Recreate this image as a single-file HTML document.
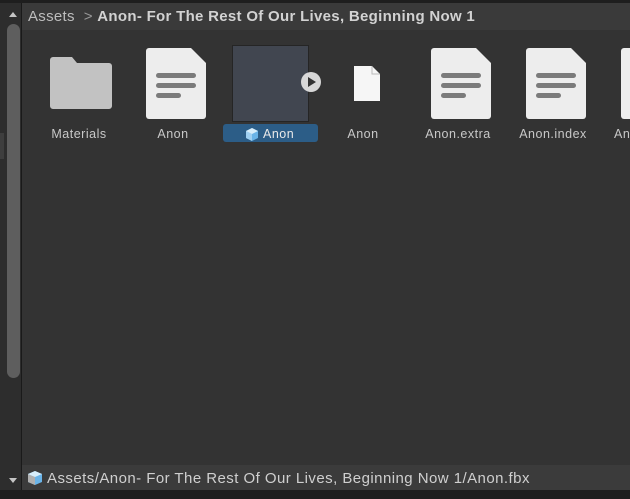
<!DOCTYPE html>
<html><head><style>
*{margin:0;padding:0;box-sizing:border-box}
body{width:630px;height:499px;background:#282828;position:relative;overflow:hidden;font-family:"Liberation Sans",sans-serif;color:#c4c4c4}
.abs{position:absolute}
.lbl{position:absolute;font-size:12.5px;color:#c8c8c8;text-align:center;width:90px;top:127px;letter-spacing:0.5px}
</style></head><body>
<div class="abs" style="left:0;top:0;width:630px;height:3px;background:#1e1e1e"></div>
<div class="abs" style="left:0;top:3px;width:21px;height:487px;background:#2d2d2d"></div>
<div class="abs" style="left:0;top:133px;width:4px;height:26px;background:#3e3e3e"></div>
<div class="abs" style="left:7px;top:24px;width:13px;height:354px;background:#5e5e5e;border-radius:7px"></div>
<div class="abs" style="left:9px;top:12px;width:0;height:0;border-left:4px solid transparent;border-right:4px solid transparent;border-bottom:5px solid #c4c4c4"></div>
<div class="abs" style="left:9px;top:478px;width:0;height:0;border-left:4px solid transparent;border-right:4px solid transparent;border-top:5px solid #c4c4c4"></div>
<div class="abs" style="left:21px;top:3px;width:1px;height:487px;background:#1a1a1a"></div>
<div class="abs" style="left:22px;top:3px;width:608px;height:27px;background:#3a3a3a"></div>
<div class="abs" style="left:22px;top:30px;width:608px;height:435px;background:#333333"></div>
<div class="abs" style="left:28px;top:8px;font-size:15px;color:#bdbdbd;white-space:nowrap;letter-spacing:0.3px">Assets <span style="color:#999">&nbsp;&gt;&nbsp;</span><b style="color:#d2d2d2">Anon- For The Rest Of Our Lives, Beginning Now 1</b></div>
<svg class="abs" style="left:50px;top:57px" width="62" height="52"><path d="M3 0h19l5 6h32a3 3 0 0 1 3 3v40a3 3 0 0 1-3 3H3a3 3 0 0 1-3-3V3a3 3 0 0 1 3-3z" fill="#c2c2c2"/></svg>
<div class="lbl" style="left:34px">Materials</div>
<svg class="abs" style="left:146px;top:48px" width="60" height="71"><path d="M3 0h42l15 15v53a3 3 0 0 1-3 3H3a3 3 0 0 1-3-3V3a3 3 0 0 1 3-3z" fill="#ededed"/><rect x="10" y="25" width="40" height="5" rx="2.5" fill="#7b7b7b"/><rect x="10" y="35" width="40" height="5" rx="2.5" fill="#7b7b7b"/><rect x="10" y="45" width="25" height="5" rx="2.5" fill="#7b7b7b"/></svg>
<div class="lbl" style="left:128px">Anon</div>
<div class="abs" style="left:232px;top:45px;width:77px;height:77px;background:#414650;border:1px solid #252525"></div>
<svg class="abs" style="left:300px;top:71px" width="22" height="22"><circle cx="11" cy="11" r="10" fill="#d8d8d8"/><path d="M8 6l8 5-8 5z" fill="#333"/></svg>
<div class="abs" style="left:223px;top:124px;width:95px;height:18px;background:#2c5d87;border-radius:3px"></div>
<svg class="abs" style="left:245px;top:127px" width="14" height="14"><path d="M7 1l6 3v7l-6 3-6-3V4z" fill="#6ab4e8"/><path d="M1 4l6 3v7l-6-3z" fill="#9fd0f2"/><path d="M7 1l6 3-6 3-6-3z" fill="#d8eefb"/></svg>
<div class="abs" style="left:263px;top:127px;font-size:12.5px;color:#e8e8e8;letter-spacing:0.5px">Anon</div>
<svg class="abs" style="left:353px;top:65px" width="28" height="37"><path d="M1 1h18l8 8v27H1z" fill="#f6f6f6"/><path d="M19 1v8h8" fill="none" stroke="#bbb" stroke-width="1"/></svg>
<div class="lbl" style="left:318px">Anon</div>
<svg class="abs" style="left:431px;top:48px" width="60" height="71"><path d="M3 0h42l15 15v53a3 3 0 0 1-3 3H3a3 3 0 0 1-3-3V3a3 3 0 0 1 3-3z" fill="#ededed"/><rect x="10" y="25" width="40" height="5" rx="2.5" fill="#7b7b7b"/><rect x="10" y="35" width="40" height="5" rx="2.5" fill="#7b7b7b"/><rect x="10" y="45" width="25" height="5" rx="2.5" fill="#7b7b7b"/></svg>
<div class="lbl" style="left:413px">Anon.extra</div>
<svg class="abs" style="left:526px;top:48px" width="60" height="71"><path d="M3 0h42l15 15v53a3 3 0 0 1-3 3H3a3 3 0 0 1-3-3V3a3 3 0 0 1 3-3z" fill="#ededed"/><rect x="10" y="25" width="40" height="5" rx="2.5" fill="#7b7b7b"/><rect x="10" y="35" width="40" height="5" rx="2.5" fill="#7b7b7b"/><rect x="10" y="45" width="25" height="5" rx="2.5" fill="#7b7b7b"/></svg>
<div class="lbl" style="left:508px">Anon.index</div>
<svg class="abs" style="left:621px;top:48px" width="9" height="71"><path d="M3 0h6v71H3a3 3 0 0 1-3-3V3a3 3 0 0 1 3-3z" fill="#ededed"/></svg>
<div class="abs" style="left:614px;top:127px;font-size:12.5px;color:#c8c8c8;letter-spacing:0.5px">An</div>
<div class="abs" style="left:22px;top:465px;width:608px;height:25px;background:#3b3b3b"></div>
<svg class="abs" style="left:27px;top:470px" width="16" height="16"><path d="M8 1l7 3v8l-7 3-7-3V4z" fill="#6ab4e8"/><path d="M1 4l7 3v8l-7-3z" fill="#b0b0b0"/><path d="M8 1l7 3-7 3-7-3z" fill="#d8eefb"/></svg>
<div class="abs" style="left:47px;top:470px;font-size:15px;color:#cfcfcf;white-space:nowrap;letter-spacing:0.45px">Assets/Anon- For The Rest Of Our Lives, Beginning Now 1/Anon.fbx</div>
<div class="abs" style="left:0;top:490px;width:630px;height:9px;background:#1e1e1e"></div>
</body></html>
